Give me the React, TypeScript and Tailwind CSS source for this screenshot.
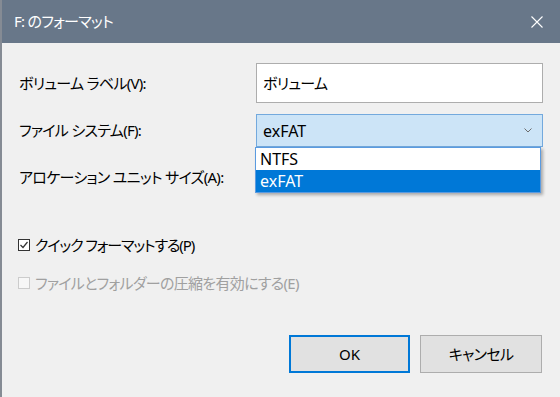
import React from "react";

const font = "font-['Noto_Sans','Noto_Sans_CJK_JP',sans-serif] [font-feature-settings:'palt']";
const label = "text-[15px] leading-none tracking-[-0.7px]";

function Checkbox({ checked, disabled, text, tight }: { checked?: boolean; disabled?: boolean; text: string; tight?: boolean }) {
  return (
    <div className="flex items-center h-[20px] -ml-[1px]">
      <div
        className={
          "w-[12px] h-[12px] border flex items-center justify-center " +
          (disabled ? "border-[#cccccc] bg-[#f7f7f7]" : "border-[#333333] bg-white")
        }
      >
        {checked && (
          <svg width="10" height="10" viewBox="0 0 10 10">
            <polyline points="1.5,5 4,7.5 8.5,2" fill="none" stroke="#333333" strokeWidth="1.2" />
          </svg>
        )}
      </div>
      <span
        className={
          "ml-[5px] text-[15px] leading-none " +
          (tight ? "tracking-[-1.1px]" : "tracking-[-0.7px]") +
          (disabled ? " text-[#a0a0a0]" : " text-black")
        }
      >
        {text}
      </span>
    </div>
  );
}

export default function App() {
  return (
    <div className={"w-[560px] h-[397px] bg-[#f0f0f0] border-l-2 border-[#858b94] flex flex-col " + font}>
      {/* title bar */}
      <div className="h-[43px] bg-[#687789] flex items-center justify-between pl-[12px] pr-[17px] shrink-0">
        <span className={"text-white " + label}>F: のフォーマット</span>
        <svg width="12" height="12" viewBox="0 0 12 12">
          <path d="M0.5 0.5 L11.5 11.5 M11.5 0.5 L0.5 11.5" stroke="white" strokeWidth="1.1" fill="none" />
        </svg>
      </div>

      {/* body */}
      <div className="flex flex-col pt-[20px] pl-[17px] pr-[17px] text-black">
        <div className="flex items-center justify-between h-[40px]">
          <span className={label}>ボリューム ラベル(V):</span>
          <div className={"w-[287px] h-[40px] bg-white border border-[#adadad] flex items-center pl-[6px] " + label}>
            ボリューム
          </div>
        </div>

        <div className="flex items-center justify-between h-[33px] mt-[11px]">
          <span className={label}>ファイル システム(F):</span>
          <div className="relative w-[287px] h-[33px]">
            <div className="w-full h-full bg-[#cce4f7] border border-[#73a9dd] flex items-center justify-between pl-[6px] pr-[10px]">
              <span className="text-[16px] leading-none">exFAT</span>
              <svg width="8" height="5" viewBox="0 0 8 5">
                <polyline points="0.5,0.5 4,4 7.5,0.5" fill="none" stroke="#6d6d6d" strokeWidth="1" />
              </svg>
            </div>
            <div className="absolute left-[-1px] top-[33px] w-[286px] border border-[#5b9be0] bg-white shadow-[2px_2px_3px_rgba(0,0,0,0.3)] z-10">
              <div className="h-[22px] flex items-center pl-[4px] text-[16px] leading-none">NTFS</div>
              <div className="h-[22px] flex items-center pl-[4px] text-[16px] leading-none bg-[#0078d7] text-white">exFAT</div>
            </div>
          </div>
        </div>

        <div className="flex items-center h-[33px] mt-[14px]">
          <span className={label}>アロケーション ユニット サイズ(A):</span>
        </div>

        <div className="mt-[41px]">
          <Checkbox checked tight text="クイック フォーマットする(P)" />
        </div>
        <div className="mt-[18px]">
          <Checkbox disabled text="ファイルとフォルダーの圧縮を有効にする(E)" />
        </div>

        <div className="flex justify-end gap-[10px] mt-[42px] pr-[1px]">
          <button className="w-[121px] h-[38px] bg-[#e1e1e1] border-2 border-[#0078d7] text-[15px] leading-none">OK</button>
          <button className={"w-[122px] h-[38px] bg-[#e1e1e1] border border-[#adadad] " + label}>キャンセル</button>
        </div>
      </div>
    </div>
  );
}
